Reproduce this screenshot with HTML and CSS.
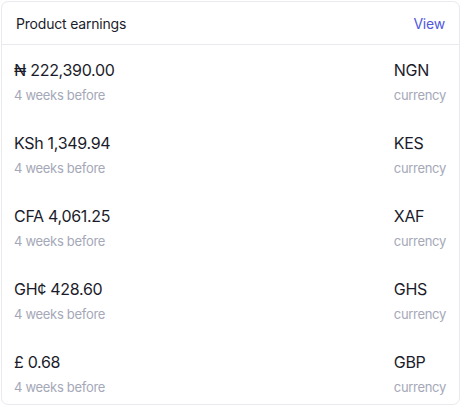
FILE: index.html
```html
<!DOCTYPE html>
<html lang="en">
<head>
  <meta charset="UTF-8" />
  <meta name="viewport" content="width=device-width, initial-scale=1.0" />
  <title>Product earnings</title>
  <link rel="stylesheet" href="styles.css">
</head>
<body>
  <div class="card">
    <div class="card-header">
      <span class="card-title">Product earnings</span>
      <a class="card-link" href="#">View</a>
    </div>

    <div class="earning">
      <div class="earning-main">
        <p class="amount">₦ 222,390.00</p>
        <p class="meta">4 weeks before</p>
      </div>
      <div class="earning-side">
        <p class="amount">NGN</p>
        <p class="meta">currency</p>
      </div>
    </div>

    <div class="earning">
      <div class="earning-main">
        <p class="amount">KSh 1,349.94</p>
        <p class="meta">4 weeks before</p>
      </div>
      <div class="earning-side">
        <p class="amount">KES</p>
        <p class="meta">currency</p>
      </div>
    </div>

    <div class="earning">
      <div class="earning-main">
        <p class="amount">CFA 4,061.25</p>
        <p class="meta">4 weeks before</p>
      </div>
      <div class="earning-side">
        <p class="amount">XAF</p>
        <p class="meta">currency</p>
      </div>
    </div>

    <div class="earning">
      <div class="earning-main">
        <p class="amount">GH¢ 428.60</p>
        <p class="meta">4 weeks before</p>
      </div>
      <div class="earning-side">
        <p class="amount">GHS</p>
        <p class="meta">currency</p>
      </div>
    </div>

    <div class="earning">
      <div class="earning-main">
        <p class="amount">£ 0.68</p>
        <p class="meta">4 weeks before</p>
      </div>
      <div class="earning-side">
        <p class="amount">GBP</p>
        <p class="meta">currency</p>
      </div>
    </div>
  </div>
</body>
</html>
```

FILE: styles.css
```css
body {
  margin: 0;
  padding: 1px;
  background-color: white;
  font-family: Inter, 'Noto Sans', sans-serif;
  color: #1b1c2b;
}
p {
  margin: 0;
}
.card {
  border: 1px solid #e9e9ef;
  border-radius: 7px;
  background-color: white;
  height: 404px;
  box-sizing: border-box;
  overflow: hidden;
}
.card-header {
  display: flex;
  justify-content: space-between;
  align-items: center;
  height: 42px;
  padding: 0 14px 0 14px;
  border-bottom: 1px solid #e9e9ef;
  letter-spacing: -0.2px;
}
.card-title {
  font-size: 14px;
}
.card-link {
  font-size: 14px;
  color: #5158e0;
  text-decoration: none;
}
.earning {
  display: flex;
  justify-content: space-between;
  padding: 14px 13px 14px 12px;
  letter-spacing: -0.3px;
}
.earning-side {
  display: flex;
  flex-direction: column;
  align-items: flex-start;
}
.amount {
  font-size: 16px;
  line-height: 22px;
}
.meta {
  margin-top: 5px;
  font-size: 13px;
  line-height: 18px;
  color: #a5a8b8;
}
```
